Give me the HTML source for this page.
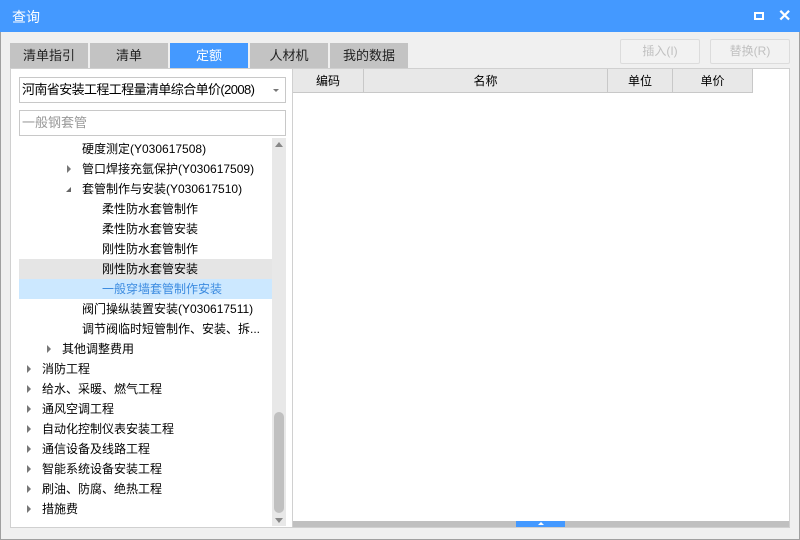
<!DOCTYPE html>
<html><head><meta charset="utf-8"><style>
*{margin:0;padding:0;box-sizing:border-box}
body{width:800px;height:540px;overflow:hidden;font-family:"Liberation Sans","Noto Sans CJK SC",sans-serif;font-size:12px;color:#000;background:#f0f0f0;position:relative}
.a{position:absolute}
.win{left:0;top:0;width:800px;height:540px;border:1px solid #a0a0a0;background:#f0f0f0}
.title{left:0;top:0;width:800px;height:32px;background:#4499ff;color:#fff;font-size:14px;line-height:34px;padding-left:12px}
.tab{top:43px;height:25px;width:78px;background:#c3c3c3;text-align:center;line-height:26px;font-size:13px;color:#222}
.btn{top:39px;height:25px;width:80px;border:1px solid #dcdcdc;background:#f2f2f2;color:#c0c0c0;text-align:center;line-height:23px;font-size:12px;border-radius:2px}
.left{left:10px;top:68px;width:283px;height:460px;background:#fff;border:1px solid #d0d0d0}
.right{left:292px;top:68px;width:498px;height:460px;background:#fff;border:1px solid #d0d0d0}
.box{left:19px;width:267px;height:26px;border:1px solid #c8c8c8;background:#fff;line-height:24px;padding-left:2px;font-size:12px}
.row{left:19px;width:253px;height:20px;line-height:20px;font-size:12px;white-space:nowrap}
.tri{position:absolute;width:0;height:0;border-top:4px solid transparent;border-bottom:4px solid transparent;border-left:4px solid #777;top:6px}
.hd{top:69px;height:24px;background:#e8e8e8;border-right:1px solid #c8c8c8;border-bottom:1px solid #c8c8c8;text-align:center;line-height:24px;font-size:12px}
</style></head><body>
<div class="a win"></div>
<div class="a title">查询</div>
<div class="a" style="left:754px;top:12px;width:10px;height:8px;border:2px solid #fff;border-top-width:2px"></div>
<div class="a" style="left:778px;top:6px;color:#fff;font-size:16px;font-weight:bold">✕</div>

<div class="a tab" style="left:10px">清单指引</div>
<div class="a tab" style="left:90px">清单</div>
<div class="a tab" style="left:170px;background:#4499ff;color:#fff">定额</div>
<div class="a tab" style="left:250px">人材机</div>
<div class="a tab" style="left:330px">我的数据</div>
<div class="a btn" style="left:620px">插入(I)</div>
<div class="a btn" style="left:710px">替换(R)</div>

<div class="a left"></div>
<div class="a box" style="top:77px;font-size:13px;letter-spacing:-0.6px">河南省安装工程工程量清单综合单价(2008)<span class="a" style="right:6px;top:11px;border-left:3px solid transparent;border-right:3px solid transparent;border-top:3px solid #777"></span></div>
<div class="a box" style="top:110px;color:#999;font-size:13px">一般钢套管</div>

<div class="a" style="left:272px;top:138px;width:14px;height:388px;background:#e8e8e8"></div>
<div class="a" style="left:275px;top:142px;border-left:4px solid transparent;border-right:4px solid transparent;border-bottom:5px solid #888"></div>
<div class="a" style="left:275px;top:518px;border-left:4px solid transparent;border-right:4px solid transparent;border-top:5px solid #888"></div>
<div class="a" style="left:274px;top:412px;width:10px;height:101px;background:#c0c0c0;border-radius:5px"></div>

<div class="a row" style="top:139px;padding-left:63px">硬度测定(Y030617508)</div>
<div class="a row" style="top:159px;padding-left:63px"><span class="tri" style="left:48px"></span>管口焊接充氩保护(Y030617509)</div>
<div class="a row" style="top:179px;padding-left:63px"><span class="a" style="left:47px;top:8px;border-left:5px solid transparent;border-bottom:5px solid #666"></span>套管制作与安装(Y030617510)</div>
<div class="a row" style="top:199px;padding-left:83px">柔性防水套管制作</div>
<div class="a row" style="top:219px;padding-left:83px">柔性防水套管安装</div>
<div class="a row" style="top:239px;padding-left:83px">刚性防水套管制作</div>
<div class="a row" style="top:259px;padding-left:83px;background:#e5e5e5">刚性防水套管安装</div>
<div class="a row" style="top:279px;padding-left:83px;background:#cce8ff;color:#3b8be0">一般穿墙套管制作安装</div>
<div class="a row" style="top:299px;padding-left:63px">阀门操纵装置安装(Y030617511)</div>
<div class="a row" style="top:319px;padding-left:63px">调节阀临时短管制作、安装、拆...</div>
<div class="a row" style="top:339px;padding-left:43px"><span class="tri" style="left:28px"></span>其他调整费用</div>
<div class="a row" style="top:359px;padding-left:23px"><span class="tri" style="left:8px"></span>消防工程</div>
<div class="a row" style="top:379px;padding-left:23px"><span class="tri" style="left:8px"></span>给水、采暖、燃气工程</div>
<div class="a row" style="top:399px;padding-left:23px"><span class="tri" style="left:8px"></span>通风空调工程</div>
<div class="a row" style="top:419px;padding-left:23px"><span class="tri" style="left:8px"></span>自动化控制仪表安装工程</div>
<div class="a row" style="top:439px;padding-left:23px"><span class="tri" style="left:8px"></span>通信设备及线路工程</div>
<div class="a row" style="top:459px;padding-left:23px"><span class="tri" style="left:8px"></span>智能系统设备安装工程</div>
<div class="a row" style="top:479px;padding-left:23px"><span class="tri" style="left:8px"></span>刷油、防腐、绝热工程</div>
<div class="a row" style="top:499px;padding-left:23px"><span class="tri" style="left:8px"></span>措施费</div>

<div class="a right"></div>
<div class="a hd" style="left:293px;width:71px">编码</div>
<div class="a hd" style="left:364px;width:244px">名称</div>
<div class="a hd" style="left:608px;width:65px">单位</div>
<div class="a hd" style="left:673px;width:80px">单价</div>
<div class="a" style="left:293px;top:521px;width:496px;height:6px;background:#c0c0c0"></div>
<div class="a" style="left:516px;top:521px;width:49px;height:6px;background:#4499ff"></div>
<div class="a" style="left:538px;top:522px;border-left:3px solid transparent;border-right:3px solid transparent;border-bottom:3px solid #fff"></div>
</body></html>
